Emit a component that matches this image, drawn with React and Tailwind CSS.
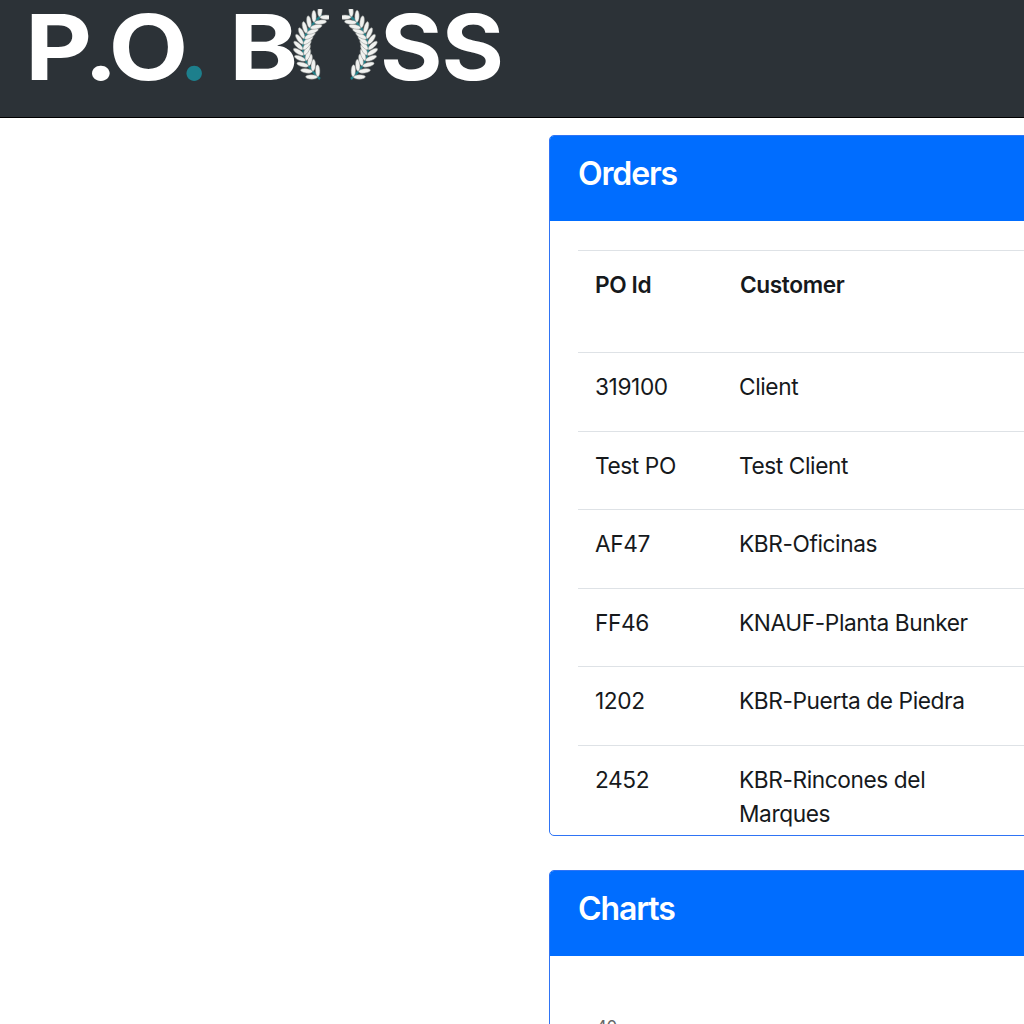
const rows = [
  ["319100", "Client"],
  ["Test PO", "Test Client"],
  ["AF47", "KBR-Oficinas"],
  ["FF46", "KNAUF-Planta Bunker"],
  ["1202", "KBR-Puerta de Piedra"],
  ["2452", "KBR-Rincones del Marques"],
];

function Wreath({ flip }) {
  // leaf pairs grow from the stem's bottom to its tip
  const P0 = [27, 70];
  const P1 = [-8, 38];
  const P2 = [29, 6];
  const leaves = [];
  for (let i = 0; i < 12; i++) {
    const t = 0.03 + i * 0.085;
    const x = (1 - t) * (1 - t) * P0[0] + 2 * t * (1 - t) * P1[0] + t * t * P2[0];
    const y = (1 - t) * (1 - t) * P0[1] + 2 * t * (1 - t) * P1[1] + t * t * P2[1];
    const dx = 2 * (1 - t) * (P1[0] - P0[0]) + 2 * t * (P2[0] - P1[0]);
    const dy = 2 * (1 - t) * (P1[1] - P0[1]) + 2 * t * (P2[1] - P1[1]);
    const base = Math.atan2(dy, dx);
    [-0.75, 0.75].forEach((turn) => {
      const a = base + turn;
      const cx = x + Math.cos(a) * 6.4;
      const cy = y + Math.sin(a) * 6.4;
      leaves.push(
        <ellipse
          key={`${i}${turn}`}
          cx={cx}
          cy={cy}
          rx="6"
          ry="2.2"
          fill="#f1f2f0"
          stroke="#8d9290"
          strokeWidth="0.5"
          transform={`rotate(${(a * 180) / Math.PI} ${cx} ${cy})`}
        />
      );
    });
  }
  return (
    <svg width="36" height="76" viewBox="0 0 36 76" className={flip ? "-scale-x-100" : ""}>
      <path d={`M${P0[0]} ${P0[1]} Q${P1[0]} ${P1[1]} ${P2[0]} ${P2[1]}`} fill="none" stroke="#1f7f88" strokeWidth="2.4" />
      {leaves}
    </svg>
  );
}

function Logo() {
  return (
    <div className="flex items-center pl-[25px] font-['Inter',sans-serif] font-bold text-white text-[91px] leading-[76px] h-[76px]">
      <span className="inline-block w-[154px] origin-left scale-x-[1.14] tracking-[-0.05em]">P.O</span>
      <span className="w-[29px] text-[#1d7f8c]">.</span>
      <span className="inline-block w-[64px] ml-[21px] origin-left scale-x-[1.15]">B</span>
      <span className="flex gap-[13px]">
        <Wreath />
        <Wreath flip />
      </span>
      <span className="inline-block ml-[2px] origin-left scale-x-[1.05] tracking-[-0.01em]">SS</span>
    </div>
  );
}

function Card({ title, children, className }) {
  return (
    <section className={`w-[640px] border border-[#2f74f5] rounded-[5px] overflow-hidden bg-white ${className}`}>
      <h2 className="h-[85px] bg-[#006dff] text-white text-[32px] font-semibold tracking-[-0.035em] leading-none pl-[28px] pt-[22px] font-['Inter',sans-serif]">
        {title}
      </h2>
      {children}
    </section>
  );
}

export default function App() {
  return (
    <div className="w-[1024px] h-[1024px] overflow-hidden bg-white text-[22.7px] leading-[34px] text-[#16191c] font-['Inter',sans-serif] tracking-[-0.018em]">
      <header className="h-[118px] bg-[#2c3237] border-b border-black pt-[9px]">
        <Logo />
      </header>
      <main className="pl-[549px] pt-[17px]">
        <Card title="Orders" className="h-[701px]">
          <div className="pt-[29px] pl-[28px]">
            <table className="w-[600px] border-collapse table-fixed">
              <thead>
                <tr className="border-t border-[#dee2e6] h-[102px] align-top">
                  <th className="w-[144px] text-left pl-[17px] pt-[17px] font-semibold">PO Id</th>
                  <th className="text-left pl-[18px] pt-[17px] font-semibold">Customer</th>
                </tr>
              </thead>
              <tbody>
                {rows.map((r) => (
                  <tr key={r[0]} className="border-t border-[#dee2e6] h-[78.5px] align-top">
                    <td className="pl-[17px] pt-[17px]">{r[0]}</td>
                    <td className="pl-[17px] pt-[17px]">
                      <div className="w-[236px]">{r[1]}</div>
                    </td>
                  </tr>
                ))}
              </tbody>
            </table>
          </div>
        </Card>
        <Card title="Charts" className="mt-[34px] h-[300px]">
          <div className="pl-[46px] pt-[59px] text-[17px] leading-[24px] text-[#666]">40</div>
        </Card>
      </main>
    </div>
  );
}
